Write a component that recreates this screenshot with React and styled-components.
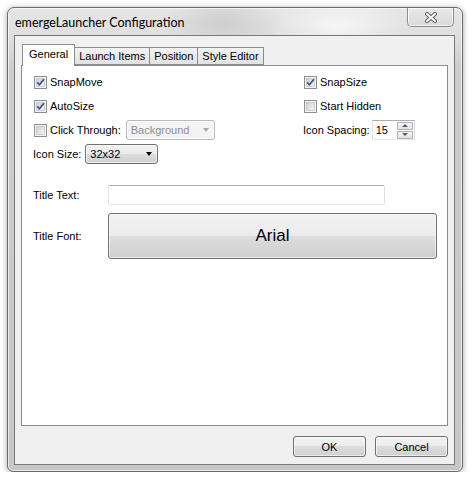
import styled, { createGlobalStyle } from 'styled-components'

const GlobalStyle = createGlobalStyle`
  html, body {
    margin: 0;
    background: #ffffff;
  }
  body {
    font-family: "Liberation Sans", Arial, sans-serif;
    font-size: 11px;
    color: #000;
  }
`

const Window = styled.div`
  box-sizing: border-box;
  margin: 7px 0 0 7px;
  width: 456px;
  height: 465px;
  padding: 0 7px 6px 6px;
  display: flex;
  flex-direction: column;
  border: 1px solid #6a6a6a;
  border-radius: 7px 7px 6px 6px;
  background:
    radial-gradient(ellipse 60px 30px at 215px 14px, rgba(190, 190, 190, 0.55), transparent),
    radial-gradient(ellipse 70px 30px at 330px 18px, rgba(255, 255, 255, 0.7), transparent),
    linear-gradient(to bottom, #e6e6e6 0, #dedede 30px, #cdcdcd 60px, #c6c6c6 100%);
  box-shadow: inset 0 0 0 1px rgba(255, 255, 255, 0.65), 0 1px 6px rgba(0, 0, 0, 0.35);
`

const TitleBar = styled.div`
  height: 27px;
  display: flex;
  align-items: center;
  padding-left: 1px;
`

const Title = styled.span`
  font-family: Lato, "Noto Sans", sans-serif;
  font-size: 12.5px;
  color: #000;
  margin-top: 1px;
`

const CloseButton = styled.div`
  box-sizing: border-box;
  margin-left: auto;
  margin-right: 1px;
  align-self: flex-start;
  width: 47px;
  height: 19px;
  display: flex;
  align-items: center;
  justify-content: center;
  border: 1px solid #8c8c8c;
  border-top: none;
  border-radius: 0 0 5px 5px;
  background: linear-gradient(to bottom, #e9e9e9, #d9d9d9);
  box-shadow: inset 0 0 0 1px rgba(255, 255, 255, 0.7);
`

const Client = styled.div`
  box-sizing: border-box;
  height: 430px;
  border: 1px solid #777777;
  background: #f0f0f0;
  padding: 8px 6px 7px 6px;
  display: flex;
  flex-direction: column;
`

const TabStrip = styled.div`
  height: 21px;
  display: flex;
  align-items: flex-end;
  padding-left: 1px;
`

const Tab = styled.div`
  box-sizing: border-box;
  height: ${(p) => (p.$active ? '22px' : '18px')};
  margin-bottom: ${(p) => (p.$active ? '-1px' : '0')};
  margin-left: -1px;
  padding: ${(p) => (p.$active ? '3px 6px 0' : '2px 4px 0')};
  border: 1px solid #898c95;
  border-bottom: ${(p) => (p.$active ? 'none' : '1px solid #898c95')};
  background: ${(p) => (p.$active ? '#ffffff' : 'linear-gradient(to bottom, #f3f3f3, #e2e2e2)')};
  position: relative;
  z-index: ${(p) => (p.$active ? 1 : 0)};
  white-space: nowrap;
  &:first-child {
    margin-left: 0;
  }
`

const Panel = styled.div`
  box-sizing: border-box;
  height: 361px;
  border: 1px solid #898c95;
  background: #ffffff;
  padding: 4px 0 0 11px;
`

const OptionGrid = styled.div`
  display: grid;
  grid-template-columns: 270px 1fr;
  grid-auto-rows: 24px;
  align-items: center;
`

const Cell = styled.div`
  display: flex;
  align-items: center;
  gap: ${(p) => p.$gap || 3}px;
  padding-left: ${(p) => p.$indent || 0}px;
`

const Check = styled.span`
  display: inline-flex;
  width: 13px;
  height: 13px;
`

const Label = styled.span`
  white-space: nowrap;
`

const Combo = styled.div`
  box-sizing: border-box;
  width: ${(p) => p.$width}px;
  height: 20px;
  display: flex;
  align-items: center;
  justify-content: space-between;
  padding: 0 4px 0 4px;
  border: 1px solid ${(p) => (p.$disabled ? '#b9b9b9' : '#707070')};
  border-radius: 3px;
  color: ${(p) => (p.$disabled ? '#8e8e8e' : '#000')};
  background: ${(p) =>
    p.$disabled
      ? '#f4f4f4'
      : 'linear-gradient(to bottom, #f2f2f2 0, #ebebeb 50%, #dddddd 50%, #cfcfcf 100%)'};
  box-shadow: inset 0 0 0 1px rgba(255, 255, 255, 0.6);
`

const Arrow = styled.span`
  width: 0;
  height: 0;
  margin-right: 1px;
  border-left: 3.5px solid transparent;
  border-right: 3.5px solid transparent;
  border-top: 4px solid ${(p) => (p.$disabled ? '#a8a8a8' : '#000')};
`

const Spinner = styled.div`
  box-sizing: border-box;
  width: 43px;
  height: 20px;
  display: flex;
  align-items: center;
  justify-content: space-between;
  padding-left: 3px;
  border: 1px solid;
  border-color: #abadb3 #dbdfe6 #e3e9ef #e2e3ea;
  background: #fff;
`

const SpinButtons = styled.div`
  display: flex;
  flex-direction: column;
  gap: 1px;
  margin-right: 1px;
`

const SpinButton = styled.div`
  box-sizing: border-box;
  width: 16px;
  height: 8px;
  display: flex;
  align-items: center;
  justify-content: center;
  border: 1px solid #b4b4b4;
  background: linear-gradient(to bottom, #f5f5f5, #e2e2e2);
  &::after {
    content: '';
    width: 0;
    height: 0;
    border-left: 3px solid transparent;
    border-right: 3px solid transparent;
    ${(p) =>
      p.$down ? 'border-top: 3px solid #4b5d86;' : 'border-bottom: 3px solid #4b5d86;'}
  }
`

const FieldRow = styled.div`
  display: grid;
  grid-template-columns: 75px auto;
  align-items: center;
  margin-top: ${(p) => p.$top}px;
`

const TextInput = styled.div`
  box-sizing: border-box;
  width: 277px;
  height: 20px;
  border: 1px solid;
  border-color: #abadb3 #dbdfe6 #e3e9ef #e2e3ea;
  border-radius: 2px;
  background: #fff;
`

const FontButton = styled.div`
  box-sizing: border-box;
  width: 329px;
  height: 46px;
  display: flex;
  align-items: center;
  justify-content: center;
  border: 1px solid #707070;
  border-radius: 3px;
  font-size: 17px;
  background: linear-gradient(to bottom, #f2f2f2 0, #ebebeb 50%, #dddddd 50%, #cfcfcf 100%);
  box-shadow: inset 0 0 0 1px rgba(255, 255, 255, 0.6);
`

const ButtonRow = styled.div`
  display: flex;
  justify-content: flex-end;
  gap: 9px;
  margin-top: 10px;
`

const Button = styled.div`
  box-sizing: border-box;
  width: 73px;
  height: 21px;
  display: flex;
  align-items: center;
  justify-content: center;
  border: 1px solid #707070;
  border-radius: 3px;
  background: linear-gradient(to bottom, #f2f2f2 0, #ebebeb 50%, #dddddd 50%, #cfcfcf 100%);
  box-shadow: inset 0 0 0 1px rgba(255, 255, 255, 0.6);
`

function CheckBox({ checked }) {
  return (
    <Check>
      <svg width="13" height="13" viewBox="0 0 13 13">
        <defs>
          <linearGradient id="cbfill" x1="0" y1="0" x2="1" y2="1">
            <stop offset="0" stopColor="#cbcfd5" />
            <stop offset="1" stopColor="#f6f6f6" />
          </linearGradient>
        </defs>
        <rect x="0.5" y="0.5" width="12" height="12" fill="#f4f4f4" stroke="#8e8f8f" />
        <rect x="2.5" y="2.5" width="8" height="8" fill="url(#cbfill)" stroke="#b5b9bf" strokeWidth="0.6" />
        {checked && (
          <path d="M3.2 6.3 L5.4 8.8 L9.9 3.2" fill="none" stroke="#3c5190" strokeWidth="1.7" />
        )}
      </svg>
    </Check>
  )
}

function CloseGlyph() {
  return (
    <svg width="14" height="11" viewBox="0 0 14 11">
      <path d="M3 2 L11 9 M11 2 L3 9" stroke="#5e6064" strokeWidth="4" strokeLinecap="round" />
      <path d="M3 2 L11 9 M11 2 L3 9" stroke="#ffffff" strokeWidth="2" strokeLinecap="round" />
    </svg>
  )
}

const tabs = ['General', 'Launch Items', 'Position', 'Style Editor']

export default function App() {
  return (
    <>
      <GlobalStyle />
      <Window>
        <TitleBar>
          <Title>emergeLauncher Configuration</Title>
          <CloseButton>
            <CloseGlyph />
          </CloseButton>
        </TitleBar>
        <Client>
          <TabStrip>
            {tabs.map((t, i) => (
              <Tab key={t} $active={i === 0}>
                {t}
              </Tab>
            ))}
          </TabStrip>
          <Panel>
            <OptionGrid>
              <Cell $indent={1}>
                <CheckBox checked />
                <Label>SnapMove</Label>
              </Cell>
              <Cell $indent={1}>
                <CheckBox checked />
                <Label>SnapSize</Label>
              </Cell>
              <Cell $indent={1}>
                <CheckBox checked />
                <Label>AutoSize</Label>
              </Cell>
              <Cell $indent={1}>
                <CheckBox />
                <Label>Start Hidden</Label>
              </Cell>
              <Cell $indent={1}>
                <CheckBox />
                <Label>Click Through:</Label>
                <Combo $width={89} $disabled style={{ marginLeft: 2 }}>
                  <span>Background</span>
                  <Arrow $disabled />
                </Combo>
              </Cell>
              <Cell $gap={2}>
                <Label>Icon Spacing:</Label>
                <Spinner>
                  <span>15</span>
                  <SpinButtons>
                    <SpinButton />
                    <SpinButton $down />
                  </SpinButtons>
                </Spinner>
              </Cell>
              <Cell $gap={4}>
                <Label>Icon Size:</Label>
                <Combo $width={73}>
                  <span>32x32</span>
                  <Arrow />
                </Combo>
              </Cell>
            </OptionGrid>
            <FieldRow $top={19}>
              <Label>Title Text:</Label>
              <TextInput />
            </FieldRow>
            <FieldRow $top={8}>
              <Label>Title Font:</Label>
              <FontButton>Arial</FontButton>
            </FieldRow>
          </Panel>
          <ButtonRow>
            <Button>OK</Button>
            <Button>Cancel</Button>
          </ButtonRow>
        </Client>
      </Window>
    </>
  )
}
